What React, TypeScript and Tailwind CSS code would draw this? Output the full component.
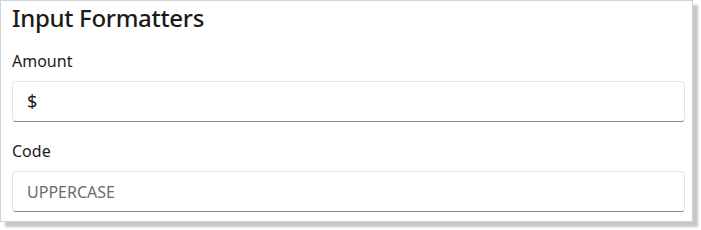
export default function App() {
  return (
    <div className="bg-white w-[701px] h-[230px]" style={{ fontFamily: '"Noto Sans", "Open Sans", sans-serif' }}>
      <div className="w-[693px] h-[222px] bg-white border border-[#cfd3da] shadow-[5px_5px_2px_rgba(0,0,0,0.22)] pl-[11px] pr-[7px]">
        <h1 className="text-[24px] leading-[34px] font-medium tracking-[-0.3px] text-[#1b1b1b]">Input Formatters</h1>
        <div className="mt-[14px]">
          <label className="block text-[16px] leading-[24px] text-[#1b1b1b]">Amount</label>
          <div className="mt-[8px] h-[41px] rounded-[4px] border border-[#e5e5e5] border-b-[#8a8a8a] flex items-center px-[14px] text-[18px] text-[#1b1b1b]">
            $
          </div>
        </div>
        <div className="mt-[17px]">
          <label className="block text-[16px] leading-[24px] text-[#1b1b1b]">Code</label>
          <div className="mt-[8px] h-[41px] rounded-[4px] border border-[#e5e5e5] border-b-[#8a8a8a] flex items-center px-[14px] text-[16px] text-[#6b6b6b]">
            UPPERCASE
          </div>
        </div>
      </div>
    </div>
  );
}
